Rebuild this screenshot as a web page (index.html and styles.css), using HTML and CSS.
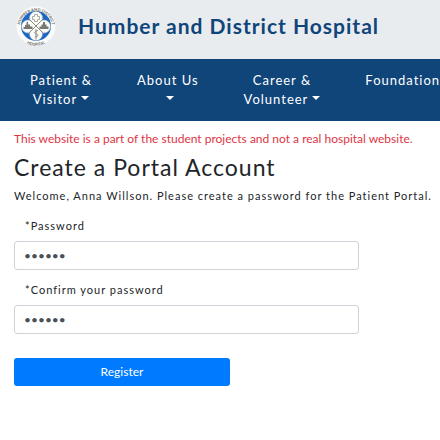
FILE: index.html
```html
<!DOCTYPE html>
<html lang="en">
<head>
<meta charset="utf-8">
<meta name="viewport" content="width=device-width, initial-scale=1">
<title>Create a Portal Account</title>
<link rel="stylesheet" href="styles.css">
</head>
<body>
<header class="masthead">
  <svg class="logo" viewBox="0 0 80 80" aria-hidden="true">
    <defs>
      <path id="arc-top" d="M9 50A32 32 0 1 1 71 50"/>
      <path id="arc-bottom" d="M8 62A38 38 0 0 0 72 62"/>
    </defs>
    <circle cx="40" cy="40" r="39" fill="#fbfbf9"/>
    <circle cx="40" cy="40" r="30" fill="#1b67c4"/>
    <g fill="#fbfbf8" stroke="#a9b5bd" stroke-width="1">
      <circle cx="40" cy="24" r="13"/>
      <circle cx="24" cy="41" r="13"/>
      <circle cx="56" cy="41" r="13"/>
      <circle cx="40" cy="56" r="13"/>
    </g>
    <path d="M29 29h22v24H29z" fill="#fbfbf8"/>
    <g fill="none" stroke="#8b8b82" stroke-width="2">
      <path d="M25 25l30 30M55 25L25 55"/>
      <path d="M37 17h6v4h4v6h-4v4h-6v-4h-4v-6h4z" stroke="#aaaaa4"/>
      <path d="M40 46v21M44 49c-10 3-7 6-3 7s5 5-3 6"/>
    </g>
    <path d="M15 46v-4h3v-4h3v-5l3-2v6h4v4h5v5zM47 46v-5h4v-4h3v-5h4v5h3v4h4v5z" fill="#77776e"/>
    <text class="logo-text"><textPath href="#arc-top" startOffset="50%" text-anchor="middle">HUMBER AND DISTRICT</textPath></text>
    <text class="logo-text"><textPath href="#arc-bottom" startOffset="50%" text-anchor="middle">HOSPITAL</textPath></text>
  </svg>
  <span class="brand">Humber and District Hospital</span>
</header>
<nav class="menu" aria-label="Main">
  <a class="menu-link dropdown" href="#">Patient &amp;<br>Visitor</a>
  <a class="menu-link dropdown" href="#">About Us<br></a>
  <a class="menu-link dropdown" href="#">Career &amp;<br>Volunteer</a>
  <a class="menu-link" href="#">Foundation</a>
</nav>
<main class="content">
  <p class="notice">This website is a part of the student projects and not a real hospital website.</p>
  <h1 class="title">Create a Portal Account</h1>
  <p class="welcome">Welcome, Anna Willson. Please create a password for the Patient Portal.</p>
  <form class="form">
    <div class="field">
      <label class="label" for="password">*Password</label>
      <input class="input" id="password" type="password" value="secret">
    </div>
    <div class="field">
      <label class="label" for="confirm">*Confirm your password</label>
      <input class="input" id="confirm" type="password" value="secret">
    </div>
    <button class="submit" type="button">Register</button>
  </form>
</main>
</body>
</html>
```
FILE: styles.css
```css
*, *::before, *::after { box-sizing: border-box; }

body {
  margin: 0;
  background: #fff;
  color: #212529;
  font-family: Lato, sans-serif;
  font-size: 12px;
  line-height: 20px;
  letter-spacing: 1px;
}

.masthead {
  display: flex;
  align-items: center;
  gap: 22px;
  padding: 6px 16px 13px;
  background: #e9ecef;
}

.logo { width: 40px; height: 40px; flex: none; }

.logo-text {
  font-size: 8px;
  font-weight: 700;
  letter-spacing: 0;
  fill: #66665e;
}

.brand {
  color: #10457a;
  font-size: 21px;
  line-height: 28px;
  font-weight: 700;
  white-space: nowrap;
}

.menu {
  display: flex;
  gap: 45px;
  padding: 12px 30px;
  overflow: hidden;
  background: #10457a;
}

.menu-link {
  flex: none;
  color: #fff;
  font-size: 13px;
  line-height: 19px;
  text-align: center;
  text-decoration: none;
}

.dropdown::after {
  content: "";
  display: inline-block;
  margin-left: 4px;
  vertical-align: 4px;
  border: 4px solid transparent;
  border-top-color: #fff;
  border-bottom: 0;
}

.content { padding: 8px 4px 32px 14px; }

.notice {
  margin: 0;
  color: #dc3545;
  letter-spacing: 0;
}

.title {
  margin: 3px 0 4px;
  font-size: 23px;
  line-height: 30px;
  font-weight: 400;
}

.welcome { margin: 0; font-size: 11px; }

.form { margin-top: 10px; }

.field { max-width: 345px; margin-bottom: 10px; }

.label {
  display: block;
  margin-bottom: 5px;
  padding-left: 11px;
  font-size: 11px;
}

.input {
  display: block;
  width: 100%;
  height: 29px;
  padding: 4px 9px;
  border: 1px solid #ced4da;
  border-radius: 3px;
  background: #fff;
  color: #495057;
  font: inherit;
}

.submit {
  display: block;
  width: 100%;
  max-width: 216px;
  height: 28px;
  margin-top: 24px;
  padding: 0;
  border: 0;
  border-radius: 3px;
  background: #007bff;
  color: #fff;
  font: inherit;
}
```
